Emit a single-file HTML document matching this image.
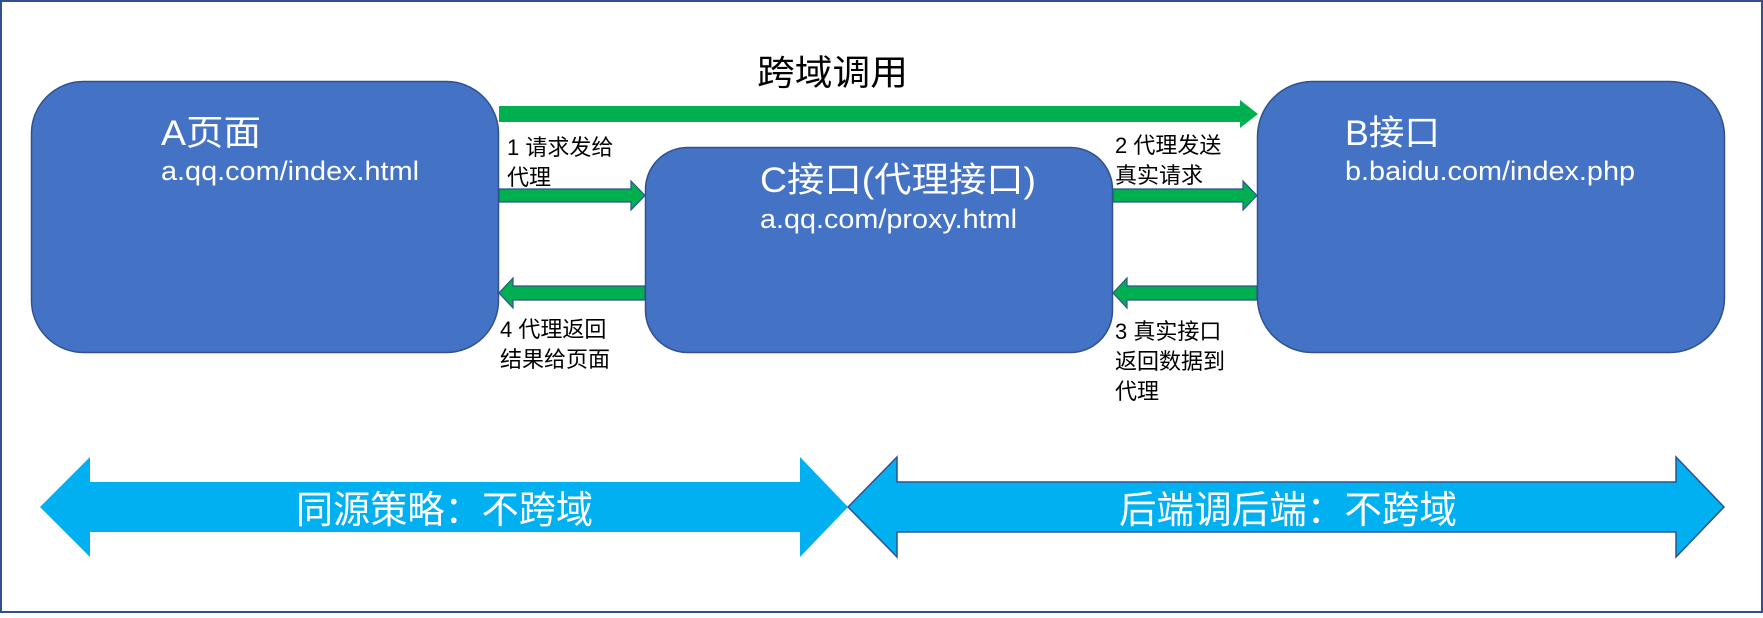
<!DOCTYPE html>
<html><head><meta charset="utf-8"><style>
html,body{margin:0;padding:0;background:#fff}
svg text{font-family:"Liberation Sans","Noto Sans CJK SC",sans-serif}
</style></head><body>
<svg width="1763" height="613" viewBox="0 0 1763 613" xmlns="http://www.w3.org/2000/svg">
<rect x="1" y="1" width="1761" height="611" fill="#fff" stroke="#2f528f" stroke-width="2"/>
<rect x="31.5" y="81.5" width="467" height="271" rx="52" fill="#4472c4" stroke="#2f528f" stroke-width="1.5"/>
<rect x="645.5" y="147.5" width="467" height="205" rx="42" fill="#4472c4" stroke="#2f528f" stroke-width="1.5"/>
<rect x="1257.5" y="81.5" width="467" height="271" rx="55" fill="#4472c4" stroke="#2f528f" stroke-width="1.5"/>
<polygon points="499,106 1240,106 1240,100 1258,114 1240,128 1240,122 499,122" fill="#00b050"/>
<text x="757" y="85" font-size="35" fill="#000" textLength="151" lengthAdjust="spacingAndGlyphs">跨域调用</text>
<g fill="#00b050" stroke="#2f528f" stroke-width="1.2">
<polygon points="499,189 631,189 631,181 645,195.5 631,210 631,202 499,202"/>
<polygon points="1113,189 1243,189 1243,181 1257,195.5 1243,210 1243,202 1113,202"/>
<polygon points="645,286 513,286 513,278 499,293 513,308 513,300 645,300"/>
<polygon points="1257,286 1127,286 1127,278 1113,293 1127,308 1127,300 1257,300"/>
</g>
<g fill="#fff">
<text x="161" y="145" font-size="35" textLength="100" lengthAdjust="spacingAndGlyphs">A页面</text>
<text x="161" y="180" font-size="27" textLength="258" lengthAdjust="spacingAndGlyphs">a.qq.com/index.html</text>
<text x="760" y="192" font-size="35" textLength="276" lengthAdjust="spacingAndGlyphs">C接口(代理接口)</text>
<text x="760" y="228" font-size="27" textLength="257" lengthAdjust="spacingAndGlyphs">a.qq.com/proxy.html</text>
<text x="1345" y="145" font-size="35" textLength="95" lengthAdjust="spacingAndGlyphs">B接口</text>
<text x="1345" y="180" font-size="27" textLength="290" lengthAdjust="spacingAndGlyphs">b.baidu.com/index.php</text>
</g>
<g fill="#000" font-size="22">
<text x="507" y="155">1 请求发给</text>
<text x="507" y="185">代理</text>
<text x="1115" y="153">2 代理发送</text>
<text x="1115" y="183">真实请求</text>
<text x="500" y="337">4 代理返回</text>
<text x="500" y="367">结果给页面</text>
<text x="1115" y="339">3 真实接口</text>
<text x="1115" y="369">返回数据到</text>
<text x="1115" y="399">代理</text>
</g>
<polygon points="40,507 90,457 90,482 800,482 800,457 848,507 800,557 800,532 90,532 90,557" fill="#00b0f0"/>
<polygon points="848,507 897,457 897,482 1676,482 1676,457 1724,507 1676,557 1676,532 897,532 897,557" fill="#00b0f0" stroke="#2f528f" stroke-width="1.5"/>
<g fill="#fff" font-size="38">
<text x="296" y="523" textLength="297" lengthAdjust="spacingAndGlyphs">同源策略：不跨域</text>
<text x="1119" y="523" textLength="338" lengthAdjust="spacingAndGlyphs">后端调后端：不跨域</text>
</g>
</svg>
</body></html>
